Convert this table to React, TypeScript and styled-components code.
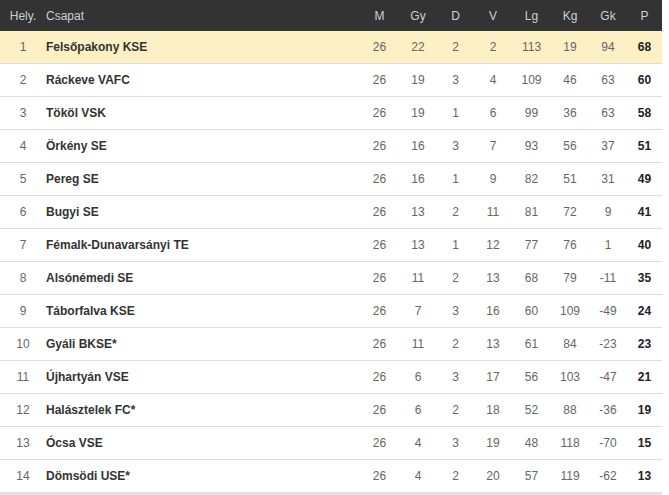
import React from "react";
import styled, { createGlobalStyle } from "styled-components";

const GlobalStyle = createGlobalStyle`
  body {
    margin: 0;
    background: #ffffff;
    font-family: "Liberation Sans", Arial, sans-serif;
  }
`;

const COLUMNS = "46px 1fr 39px 38px 37px 38px 39px 38px 38px 35px";

const Table = styled.div`
  width: 662px;
  font-size: 12px;
`;

const HeaderRow = styled.div`
  display: grid;
  grid-template-columns: ${COLUMNS};
  align-items: center;
  height: 31px;
  background-color: #333333;
  color: #cfcfcf;
`;

const Row = styled.div<{ $highlight?: boolean }>`
  display: grid;
  grid-template-columns: ${COLUMNS};
  align-items: center;
  height: 32px;
  border-bottom: 1px solid #dddddd;
  background-color: ${(props) => (props.$highlight ? "#fdf0c4" : "#ffffff")};
`;

const Pos = styled.span`
  text-align: center;
  color: #666666;
`;

const Team = styled.span`
  font-weight: bold;
  color: #333333;
  white-space: nowrap;
`;

const HeadName = styled.span`
  text-align: left;
`;

const Num = styled.span<{ $strong?: boolean }>`
  text-align: center;
  color: ${(props) => (props.$strong ? "#222222" : "#666666")};
  font-weight: ${(props) => (props.$strong ? "bold" : "normal")};
`;

const HeadNum = styled.span`
  text-align: center;
`;

const ScrollTrack = styled.div`
  width: 662px;
  height: 4px;
  background-color: #e4e4e4;
`;

type Team = [string, number, number, number, number, number, number, number, number];

const rows: Team[] = [
  ["Felsőpakony KSE", 26, 22, 2, 2, 113, 19, 94, 68],
  ["Ráckeve VAFC", 26, 19, 3, 4, 109, 46, 63, 60],
  ["Tököl VSK", 26, 19, 1, 6, 99, 36, 63, 58],
  ["Örkény SE", 26, 16, 3, 7, 93, 56, 37, 51],
  ["Pereg SE", 26, 16, 1, 9, 82, 51, 31, 49],
  ["Bugyi SE", 26, 13, 2, 11, 81, 72, 9, 41],
  ["Fémalk-Dunavarsányi TE", 26, 13, 1, 12, 77, 76, 1, 40],
  ["Alsónémedi SE", 26, 11, 2, 13, 68, 79, -11, 35],
  ["Táborfalva KSE", 26, 7, 3, 16, 60, 109, -49, 24],
  ["Gyáli BKSE*", 26, 11, 2, 13, 61, 84, -23, 23],
  ["Újhartyán VSE", 26, 6, 3, 17, 56, 103, -47, 21],
  ["Halásztelek FC*", 26, 6, 2, 18, 52, 88, -36, 19],
  ["Ócsa VSE", 26, 4, 3, 19, 48, 118, -70, 15],
  ["Dömsödi USE*", 26, 4, 2, 20, 57, 119, -62, 13],
];

const heads = ["M", "Gy", "D", "V", "Lg", "Kg", "Gk", "P"];

export default function App() {
  return (
    <>
      <GlobalStyle />
      <Table>
        <HeaderRow>
          <HeadNum>Hely.</HeadNum>
          <HeadName>Csapat</HeadName>
          {heads.map((h) => (
            <HeadNum key={h}>{h}</HeadNum>
          ))}
        </HeaderRow>
        {rows.map((r, i) => {
          const [name, ...stats] = r;
          return (
            <Row key={name} $highlight={i === 0}>
              <Pos>{i + 1}</Pos>
              <Team>{name}</Team>
              {stats.map((s, j) => (
                <Num key={j} $strong={j === stats.length - 1}>
                  {s}
                </Num>
              ))}
            </Row>
          );
        })}
      </Table>
      <ScrollTrack />
    </>
  );
}
